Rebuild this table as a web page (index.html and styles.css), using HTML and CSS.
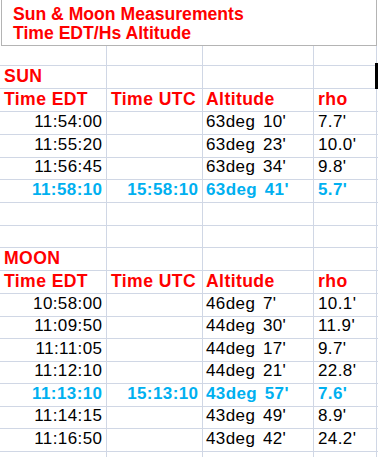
FILE: index.html
```html
<!DOCTYPE html>
<html>
<head>
<meta charset="utf-8">
<link rel="stylesheet" href="styles.css">
</head>
<body>
<div class="sheet">
  <div class="title">
    <div>Sun &amp; Moon Measurements</div>
    <div>Time EDT/Hs Altitude</div>
  </div>
  <div class="grid">
    <!-- empty row -->
    <div class="c"></div><div class="c"></div><div class="c"></div><div class="c"></div><div class="c x"></div>
    <!-- SUN -->
    <div class="c h">SUN</div><div class="c"></div><div class="c"></div><div class="c"></div><div class="c x"></div>
    <div class="c h">Time EDT</div><div class="c h">Time UTC</div><div class="c h alt">Altitude</div><div class="c h">rho</div><div class="c x"></div>
    <div class="c r">11:54:00</div><div class="c"></div><div class="c alt">63deg 10'</div><div class="c">7.7'</div><div class="c x"></div>
    <div class="c r">11:55:20</div><div class="c"></div><div class="c alt">63deg 23'</div><div class="c">10.0'</div><div class="c x"></div>
    <div class="c r">11:56:45</div><div class="c"></div><div class="c alt">63deg 34'</div><div class="c">9.8'</div><div class="c x"></div>
    <div class="c r b">11:58:10</div><div class="c r b">15:58:10</div><div class="c b alt">63deg 41'</div><div class="c b">5.7'</div><div class="c x"></div>
    <div class="c"></div><div class="c"></div><div class="c"></div><div class="c"></div><div class="c x"></div>
    <div class="c"></div><div class="c"></div><div class="c"></div><div class="c"></div><div class="c x"></div>
    <!-- MOON -->
    <div class="c h">MOON</div><div class="c"></div><div class="c"></div><div class="c"></div><div class="c x"></div>
    <div class="c h">Time EDT</div><div class="c h">Time UTC</div><div class="c h alt">Altitude</div><div class="c h">rho</div><div class="c x"></div>
    <div class="c r">10:58:00</div><div class="c"></div><div class="c alt">46deg 7'</div><div class="c">10.1'</div><div class="c x"></div>
    <div class="c r">11:09:50</div><div class="c"></div><div class="c alt">44deg 30'</div><div class="c">11.9'</div><div class="c x"></div>
    <div class="c r">11:11:05</div><div class="c"></div><div class="c alt">44deg 17'</div><div class="c">9.7'</div><div class="c x"></div>
    <div class="c r">11:12:10</div><div class="c"></div><div class="c alt">44deg 21'</div><div class="c">22.8'</div><div class="c x"></div>
    <div class="c r b">11:13:10</div><div class="c r b">15:13:10</div><div class="c b alt">43deg 57'</div><div class="c b">7.6'</div><div class="c x"></div>
    <div class="c r">11:14:15</div><div class="c"></div><div class="c alt">43deg 49'</div><div class="c">8.9'</div><div class="c x"></div>
    <div class="c r">11:16:50</div><div class="c"></div><div class="c alt">43deg 42'</div><div class="c">24.2'</div><div class="c x"></div>
    <div class="c"></div><div class="c"></div><div class="c"></div><div class="c"></div><div class="c x"></div>
  </div>
  <div class="cursor"></div>
</div>
</body>
</html>
```
FILE: styles.css
```css
html, body {
  margin: 0;
  padding: 0;
  background: #ffffff;
}
body {
  font-family: "Liberation Sans", Arial, sans-serif;
  width: 378px;
  height: 457px;
  overflow: hidden;
}
.sheet {
  position: relative;
  width: 378px;
}
.title {
  box-sizing: border-box;
  margin-left: 1px;
  width: 376px;
  height: 46px;
  border: 1px solid #b4b4b4;
  border-top: none;
  padding: 5px 0 0 11px;
  color: #ff0000;
  font-weight: bold;
  font-size: 17.6px;
  line-height: 18.5px;
}
.grid {
  display: grid;
  grid-template-columns: 107px 96px 111px 63px 1px;
  grid-template-rows: 20px 23px 23px 23px 23px 22px 23px 23px 22px 23px 23px 23px 22px 23px 22px 23px 22px 23px 23px;
}
.c {
  box-sizing: border-box;
  border-right: 1px solid #d0d7e5;
  border-bottom: 1px solid #d0d7e5;
  display: flex;
  align-items: flex-end;
  padding: 0 4px 4px 4px;
  font-size: 17px;
  line-height: 16px;
  letter-spacing: 0.4px;
  word-spacing: 2.5px;
  color: #000000;
  white-space: nowrap;
  overflow: visible;
}
.c.x {
  border-right: none;
  padding: 0;
}
.c.r {
  justify-content: flex-end;
  padding-right: 3.6px;
}
.c.alt {
  padding-left: 3px;
}
.c.h {
  color: #ff0000;
  font-weight: bold;
  font-size: 17.6px;
  letter-spacing: 0.4px;
  word-spacing: 0;
}
.c.b {
  color: #00b0f0;
  font-weight: bold;
}
.cursor {
  position: absolute;
  left: 375px;
  top: 63px;
  width: 3px;
  height: 26px;
  background: #000000;
}
```
